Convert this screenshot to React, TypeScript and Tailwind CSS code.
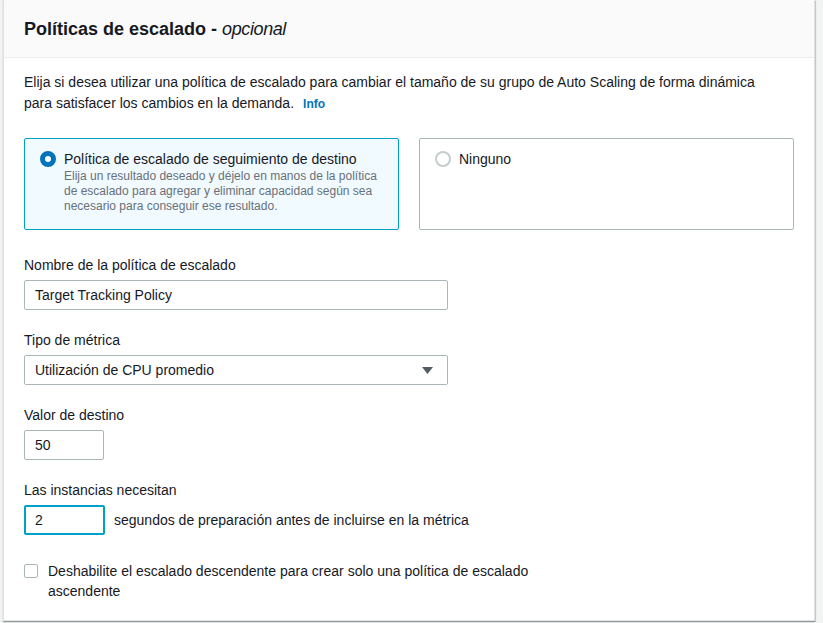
import { useState } from 'react';

const font = { fontFamily: '"Liberation Sans", Arial, sans-serif' };

const Field = ({ label, children }: { label: string; children: React.ReactNode }) => (
    <div className="flex flex-col gap-[5px]">
        <label className="text-sm leading-5 text-[#16191f]">{label}</label>
        {children}
    </div>
);

const Tile = ({
    selected,
    title,
    description,
    onSelect,
}: {
    selected: boolean;
    title: string;
    description?: string;
    onSelect: () => void;
}) => (
    <button
        type="button"
        onClick={onSelect}
        className={`flex items-start gap-[8px] rounded-[2px] border px-[15px] pt-[10px] pb-[14px] text-left ${
            selected ? 'border-[#00a1c9] bg-[#f1faff]' : 'border-[#aab7b8] bg-white'
        }`}
    >
        <span
            className={`mt-[2px] h-4 w-4 shrink-0 rounded-full ${
                selected ? 'border-[5px] border-[#0073bb] bg-white' : 'border-2 border-[#c5cdce] bg-white'
            }`}
        />
        <span className="flex flex-col">
            <span className="text-sm leading-5 text-[#16191f]">{title}</span>
            {description && <span className="text-xs leading-[15px] text-[#687078]">{description}</span>}
        </span>
    </button>
);

export default function App() {
    const [policy, setPolicy] = useState<'target' | 'none'>('target');
    const [disableScaleIn, setDisableScaleIn] = useState(false);

    return (
        <div className="min-h-screen bg-[#f2f3f3] pl-[3px]" style={font}>
            <div className="w-[812px] border-x border-b border-[#dfe3e3] bg-white shadow-[0_1px_1px_0_rgba(0,28,36,0.3),1px_1px_1px_0_rgba(0,28,36,0.15)]">
                <div className="flex h-[58px] items-center border-b border-[#eaeded] bg-[#fafafa] px-5">
                    <h2 className="text-lg font-bold leading-6 text-[#16191f]">
                        Políticas de escalado - <i className="font-normal tracking-[-0.4px]">opcional</i>
                    </h2>
                </div>

                <div className="px-5 pt-[14px] pb-[19px]">
                    <p className="max-w-[760px] text-sm leading-[21px] text-[#16191f]">
                        Elija si desea utilizar una política de escalado para cambiar el tamaño de su grupo de Auto Scaling de forma dinámica para satisfacer los cambios en la demanda.
                        <a href="#" className="ml-[9px] inline-block text-xs font-bold leading-[21px] text-[#0073bb]">
                            Info
                        </a>
                    </p>

                    <div className="mt-[23px] grid h-[92px] grid-cols-2 gap-[20px]">
                        <Tile
                            selected={policy === 'target'}
                            onSelect={() => setPolicy('target')}
                            title="Política de escalado de seguimiento de destino"
                            description="Elija un resultado deseado y déjelo en manos de la política de escalado para agregar y eliminar capacidad según sea necesario para conseguir ese resultado."
                        />
                        <Tile selected={policy === 'none'} onSelect={() => setPolicy('none')} title="Ninguno" />
                    </div>

                    <div className="mt-[25px] flex flex-col gap-5">
                        <Field label="Nombre de la política de escalado">
                            <input
                                defaultValue="Target Tracking Policy"
                                className="h-[30px] w-[424px] rounded-[2px] border border-[#aab7b8] px-[10px] text-sm text-[#16191f] outline-none"
                            />
                        </Field>

                        <Field label="Tipo de métrica">
                            <div className="flex h-[30px] w-[424px] items-center justify-between rounded-[2px] border border-[#aab7b8] pl-[10px] pr-[14px] text-sm text-[#16191f]">
                                <span>Utilización de CPU promedio</span>
                                <svg width="11" height="7" viewBox="0 0 11 7">
                                    <path d="M0 0h11L5.5 7z" fill="#545b64" />
                                </svg>
                            </div>
                        </Field>

                        <Field label="Valor de destino">
                            <input
                                defaultValue="50"
                                className="h-[30px] w-[80px] rounded-[2px] border border-[#aab7b8] px-[10px] text-sm text-[#16191f] outline-none"
                            />
                        </Field>

                        <Field label="Las instancias necesitan">
                            <div className="flex items-center gap-[9px]">
                                <input
                                    defaultValue="2"
                                    className="h-[30px] w-[81px] rounded-[2px] border-2 border-[#00a1c9] px-[9px] text-sm text-[#16191f] outline-none"
                                />
                                <span className="text-sm text-[#16191f]">segundos de preparación antes de incluirse en la métrica</span>
                            </div>
                        </Field>
                    </div>

                    <label className="mt-[26px] flex max-w-[520px] cursor-pointer items-start gap-[10px]">
                        <input
                            type="checkbox"
                            checked={disableScaleIn}
                            onChange={(e) => setDisableScaleIn(e.target.checked)}
                            className="mt-[3px] h-[14px] w-[14px] shrink-0 appearance-none rounded-[2px] border border-[#aab7b8] bg-white checked:bg-[#0073bb]"
                        />
                        <span className="text-sm leading-5 text-[#16191f]">
                            Deshabilite el escalado descendente para crear solo una política de escalado ascendente
                        </span>
                    </label>
                </div>
            </div>
        </div>
    );
}
